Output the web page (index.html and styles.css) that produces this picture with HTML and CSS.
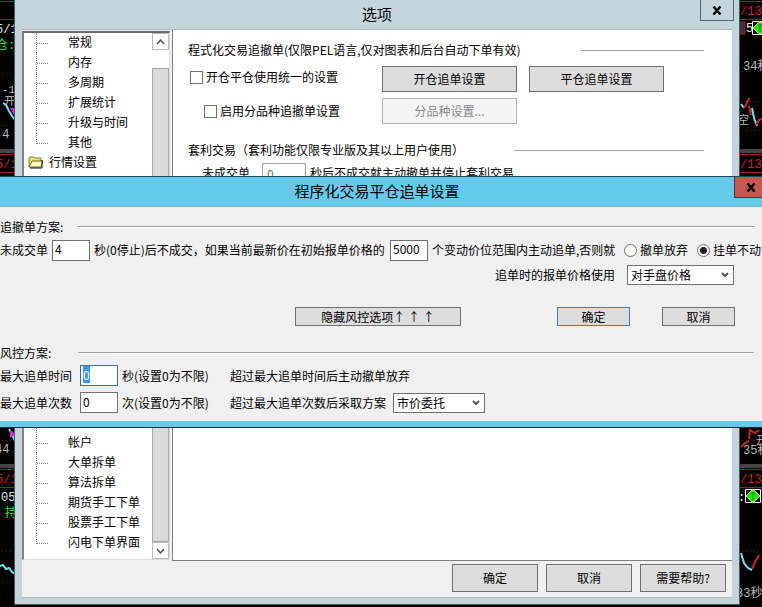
FILE: index.html
```html
<!DOCTYPE html>
<html lang="zh-CN">
<head>
    <meta charset="UTF-8">
    <meta name="viewport" content="width=device-width, initial-scale=1.0">
    <title>程序化交易平仓追单设置</title>
    <link rel="stylesheet" href="styles.css">
</head>
<body>
    <div class="desktop">
        <!-- 左侧行情图 -->
        <svg class="chart chart-left" width="16" height="607" viewBox="0 0 16 607">
            <path d="M0 1.5H16M0 19.5H16M0 154.5H16M0 172.5H16M0 469.5H16M0 487.5H16" stroke="#a81c1c"/>
            <path d="M0 149h16v4H0zM0 464h16v4H0z" fill="#444"/>
            <path d="M2 73.5H16M2 125.5H16M2 440.5H16M2 551.5H16M2 582.5H16" stroke="#701010" stroke-dasharray="1 3"/>
            <path d="M3 103l3 2 3 6 3 5 4 5M9 429l3 5 3 7M0 566l3-1 3 4 3-1 3 4 3 2" stroke="#6fe6ee" stroke-width="2" fill="none"/>
            <path d="M10 108h6v10zM10 430l6 4-6 4z" fill="#d926e0"/>
            <text class="t-white" x="-4" y="33">5/1</text>
            <text class="t-green" x="-4" y="49">仓:</text>
            <text class="t-gray small" x="2" y="93">-1</text>
            <text class="t-gray small" x="4" y="105">开</text>
            <text class="t-gray" x="-5" y="138">.4 -</text>
            <text class="t-red" x="-4" y="168">5/1</text>
            <text class="t-gray" x="-5" y="453">44 -</text>
            <text class="t-red" x="-4" y="483">5/1</text>
            <text class="t-white" x="1" y="501">05</text>
            <text class="t-green" x="5" y="517">持</text>
        </svg>
        <!-- 右侧行情图 -->
        <svg class="chart chart-right" width="24" height="607" viewBox="738 0 24 607">
            <path d="M738 1.5H762M738 19.5H762M738 154.5H762M738 172.5H762M738 469.5H762M738 487.5H762" stroke="#a81c1c"/>
            <path d="M738 149h24v4h-24zM738 464h24v4h-24z" fill="#444"/>
            <path d="M742 71.5H762M742 101.5H762M742 130.5H762M742 440.5H762M742 551.5H762" stroke="#701010" stroke-dasharray="1 3"/>
            <path d="M741 104l3 4M752 108l2 10 3 8M741 553l3 10 4 5 4 2" stroke="#6fe6ee" stroke-width="2" fill="none"/>
            <path d="M744 108l4-7 1-3M749 106l2 9M756 125l3-5 3-1M741 447l4-4 4-2M749 439l1-9 5 3 4-3M752 569l3-7 4-7" stroke="#d42020" stroke-width="2" fill="none"/>
            <path d="M738 22h7v12h-7z" fill="#333" stroke="#a81c1c"/>
            <text class="t-red" x="740" y="15">/13</text>
            <text class="t-white" x="746" y="32">5</text>
            <text class="t-gray" x="743" y="70">34秒</text>
            <text class="t-gray small" x="738" y="124">空</text>
            <text class="t-red" x="740" y="168">/13</text>
            <text class="t-gray" x="743" y="454">35秒</text>
            <text class="t-gray small" x="756" y="444">开</text>
            <text class="t-red" x="740" y="483">/13</text>
            <text class="t-white" x="738" y="501">:</text>
            <text class="t-gray" x="736" y="597">33秒</text>
            <path d="M752.500 21.500h14v13h-14z" fill="none" stroke="#fff"/>
            <path d="M753 28l6-6h2l6 6-6 6h-2z" fill="#1ee800" stroke="#b8e840"/>
            <path d="M745.500 489.500h15v13h-15z" fill="none" stroke="#fff"/>
            <path d="M746 496l6-6h2l6 6-6 6h-2z" fill="#1ee800" stroke="#b8e840"/>
            <path d="M753 492v8M751 494l2-2 2 2" stroke="#187818" fill="none"/>
            <path d="M760 24v8M758 26l2-2 2 2" stroke="#187818" fill="none"/>
        </svg>

        <!-- 选项窗口 -->
        <div class="options">
            <div class="options-title">
                <h1>选项</h1>
                <button class="close" aria-label="关闭"><svg width="10" height="9" viewBox="0 0 10 9"><path d="M1.500 0.500l7 8M8.500 0.500l-7 8" stroke="#000" stroke-width="2.400"/></svg></button>
            </div>
            <div class="options-client">
                <div class="options-main">
                    <div class="tree">
                        <div class="tree-items">
                            <ul class="branch">
                                <li>常规</li>
                                <li>内存</li>
                                <li>多周期</li>
                                <li>扩展统计</li>
                                <li>升级与时间</li>
                                <li>其他</li>
                                <li class="folder">
                                    <svg width="16" height="14" viewBox="0 0 16 14"><path d="M1 12V3l1-1h4l1 1h6v3" fill="#e4df7c" stroke="#8a8630"/><path d="M1 12l3-6h11l-2 6z" fill="#fdf9b8" stroke="#6e6a20"/><path d="M2 13h12V5" fill="none" stroke="#111"/></svg>
                                    行情设置
                                </li>
                            </ul>
                            <ul class="branch">
                                <li>帐户</li>
                                <li>大单拆单</li>
                                <li>算法拆单</li>
                                <li>期货手工下单</li>
                                <li>股票手工下单</li>
                                <li>闪电下单界面</li>
                            </ul>
                        </div>
                        <div class="scrollbar">
                            <button aria-label="向上"><svg width="9" height="6" viewBox="0 0 9 6"><path d="M1 5l3.500-4L8 5" fill="none" stroke="#555" stroke-width="1.500"/></svg></button>
                            <div class="thumb"></div>
                            <button aria-label="向下"><svg width="9" height="6" viewBox="0 0 9 6"><path d="M1 1l3.500 4L8 1" fill="none" stroke="#555" stroke-width="1.500"/></svg></button>
                        </div>
                    </div>
                    <div class="panel">
                        <div class="group-title">
                            <h2>程式化交易追撤单(仅限PEL语言,仅对图表和后台自动下单有效)</h2>
                            <hr class="line-short">
                        </div>
                        <div class="chase">
                            <label><input type="checkbox">开仓平仓使用统一的设置</label>
                            <button class="btn">开仓追单设置</button>
                            <button class="btn">平仓追单设置</button>
                            <label class="sub"><input type="checkbox">启用分品种追撤单设置</label>
                            <button class="btn" disabled>分品种设置...</button>
                        </div>
                        <div class="group-title">
                            <h2>套利交易（套利功能仅限专业版及其以上用户使用）</h2>
                            <hr class="line-long">
                        </div>
                        <div class="arbitrage">
                            <label for="arb-seconds">未成交单</label>
                            <input type="text" id="arb-seconds" value="0">
                            <span>秒后不成交就主动撤单并停止套利交易</span>
                        </div>
                    </div>
                </div>
                <div class="options-footer">
                    <button class="btn">确定</button>
                    <button class="btn">取消</button>
                    <button class="btn">需要帮助?</button>
                </div>
            </div>
        </div>

        <!-- 平仓追单设置对话框 -->
        <div class="dialog" role="dialog" aria-labelledby="dialog-title">
            <div class="dialog-title">
                <h1 id="dialog-title">程序化交易平仓追单设置</h1>
                <button class="close close-red" aria-label="关闭"><svg width="10" height="9" viewBox="0 0 10 9"><path d="M1.500 0.500l7 8M8.500 0.500l-7 8" stroke="#000" stroke-width="2.400"/></svg></button>
            </div>
            <form class="dialog-body">
                <div class="section-title">
                    <h2>追撤单方案:</h2>
                    <hr>
                </div>
                <div class="row">
                    <label for="seconds">未成交单</label>
                    <input type="text" id="seconds" value="4">
                    <label class="price-label" for="ticks">秒(0停止)后不成交，如果当前最新价在初始报单价格的</label>
                    <input type="text" id="ticks" value="5000">
                    <span class="range-label">个变动价位范围内主动追单,否则就</span>
                    <label class="radio"><input type="radio" name="otherwise">撤单放弃</label>
                    <label class="radio"><input type="radio" name="otherwise" checked>挂单不动</label>
                </div>
                <div class="row row-price">
                    <label for="price">追单时的报单价格使用</label>
                    <select id="price"><option>对手盘价格</option></select>
                </div>
                <div class="actions">
                    <button type="button" class="btn btn-toggle">隐藏风控选项↑ ↑ ↑</button>
                    <button type="button" class="btn btn-default">确定</button>
                    <button type="button" class="btn">取消</button>
                </div>
                <div class="section-title">
                    <h2>风控方案:</h2>
                    <hr>
                </div>
                <div class="row risk">
                    <label for="max-time">最大追单时间</label>
                    <input type="text" id="max-time" value="0">
                    <span class="unit">秒(设置0为不限)</span>
                    <span>超过最大追单时间后主动撤单放弃</span>
                </div>
                <div class="row risk">
                    <label for="max-count">最大追单次数</label>
                    <input type="text" id="max-count" value="0">
                    <span class="unit">次(设置0为不限)</span>
                    <label for="plan">超过最大追单次数后采取方案</label>
                    <select id="plan"><option>市价委托</option></select>
                </div>
            </form>
        </div>
    </div>

    <script>
        // 打开时选中最大追单时间
        const maxTime = document.getElementById('max-time');
        maxTime.focus();
        maxTime.select();
    </script>
</body>
</html>
```
FILE: styles.css
```css
:root {
    --frame: #c3d5db;
    --blue: #66cbea;
    --face: #f0f0f0;
    --btn: #dddddd;
    --edge: #707070;
}

* {
    box-sizing: border-box;
}

body {
    margin: 0;
    background: #000;
    color: #000;
    font-family: "Noto Sans CJK SC", sans-serif;
    font-size: 12px;
    line-height: 20px;
}

h1, h2, ul, hr {
    margin: 0;
    padding: 0;
    font-weight: normal;
}

h1 {
    font-size: 15px;
}

h2 {
    font-size: 12px;
    white-space: nowrap;
}

hr {
    border: none;
    border-top: 1px solid #a0a0a0;
}

input, button, select {
    margin: 0;
    font: inherit;
    color: inherit;
}

.desktop {
    position: relative;
    height: 100vh;
    min-height: 600px;
    overflow: hidden;
}

/* 行情图 */
.chart {
    position: absolute;
    top: 0;
    font-family: "Liberation Mono", "Noto Sans CJK SC", monospace;
    font-size: 12px;
}

.chart-left { left: 0; }
.chart-right { right: 0; }
.small { font-size: 11px; }
.t-white { fill: #e8e8e8; }
.t-gray { fill: #b8b8b8; }
.t-green { fill: #2ee02e; }
.t-red { fill: #d02020; }

/* 按钮 */
.btn {
    height: 28px;
    padding: 0;
    background: var(--btn);
    border: 1px solid var(--edge);
    line-height: 18px;
}

.btn:disabled {
    background: #f4f4f4;
    border-color: #b4b4b4;
    color: #888;
}

.close {
    position: absolute;
    top: 0;
    right: 5px;
    display: flex;
    align-items: center;
    justify-content: center;
    width: 34px;
    height: 21px;
    padding: 0;
    background: var(--frame);
    border: 1px solid #56656c;
    border-top: none;
}

.close-red {
    right: -6px;
    background: #c35a50;
    border-color: #5c3038;
}

/* 选项窗口 */
.options {
    position: absolute;
    top: 0;
    bottom: 2px;
    left: 14px;
    right: 22px;
    display: flex;
    flex-direction: column;
    padding: 0 7px 6px;
    background: var(--frame);
    border: 1px solid #4a565c;
    border-top: none;
}

.options-title {
    height: 29px;
    text-align: center;
}

.options-title h1 {
    line-height: 28px;
}

.options-client {
    flex: 1;
    display: flex;
    flex-direction: column;
    background: var(--face);
    border-top: 1px solid #b0b8bc;
    border-bottom: 1px solid #b0b8bc;
}

.options-main {
    flex: 1;
    display: flex;
    gap: 2px;
}

.tree {
    display: flex;
    width: 148px;
    margin: 1px 0;
    padding-left: 1px;
    background: #fff;
    border: 1px solid #dcdcdc;
    border-top: 2px solid #696969;
    border-left: 2px solid #808080;
}

.tree-items {
    flex: 1;
    display: flex;
    flex-direction: column;
    justify-content: space-between;
    padding-bottom: 6px;
}

.branch {
    list-style: none;
}

.branch li {
    position: relative;
    height: 20px;
    padding-left: 43px;
    line-height: 18px;
    white-space: nowrap;
}

.branch li::before {
    content: "";
    position: absolute;
    left: 11px;
    top: 0;
    width: 11px;
    height: 20px;
    border-left: 1px dotted #808080;
    background: repeating-linear-gradient(90deg, #808080 0 1px, #fff 1px 2px) 0 10px / 11px 1px no-repeat;
}

.branch li:last-child::before,
.branch li:nth-child(6)::before {
    height: 11px;
}

.branch:first-child li:last-child::before {
    display: none;
}

.branch:last-child li:first-child::before {
    top: -10px;
    height: 30px;
    background-position: 0 20px;
}

.branch .folder {
    display: flex;
    align-items: center;
    gap: 5px;
    height: 18px;
    padding-left: 3px;
}

.scrollbar {
    display: flex;
    flex-direction: column;
    width: 17px;
}

.scrollbar button {
    display: flex;
    align-items: center;
    justify-content: center;
    height: 17px;
    padding: 0;
    background: #fff;
    border: 1px solid #bcbcbc;
}

.thumb {
    flex: 1;
    margin-top: 18px;
    background: #dadada;
    border: 1px solid #a8a8a8;
}

.panel {
    flex: 1;
    padding: 10px 28px 0 15px;
    background: #fff;
    border-left: 1px solid #808080;
    border-bottom: 1px solid #808080;
}

.group-title {
    display: flex;
    align-items: center;
    justify-content: space-between;
    height: 20px;
}

.line-short { width: 123px; }
.line-long { width: 190px; }

.chase {
    display: grid;
    grid-template-columns: 182px 135px 135px;
    column-gap: 12px;
    row-gap: 6px;
    align-items: center;
    margin: 6px 0 16px;
}

.chase .btn {
    height: 26px;
}

.chase label {
    display: flex;
    align-items: center;
    gap: 3px;
    padding: 0 0 4px 2px;
    white-space: nowrap;
}

.chase .sub {
    padding: 0 0 0 16px;
}

input[type="checkbox"] {
    appearance: none;
    width: 13px;
    height: 13px;
    background: #fff;
    border: 1px solid var(--edge);
}

.arbitrage {
    display: flex;
    gap: 4px;
    margin-top: 3px;
    padding-left: 14px;
}

.arbitrage label {
    width: 56px;
}

.arbitrage input {
    width: 44px;
    height: 21px;
    padding: 0 4px;
    background: #fff;
    border: 1px solid #a0a0a0;
    color: #777;
}

.options-footer {
    display: flex;
    justify-content: flex-end;
    gap: 8px;
    padding: 3px 6px 5px;
}

.options-footer .btn {
    width: 86px;
}

/* 对话框 */
.dialog {
    position: absolute;
    top: 176px;
    left: 0;
    right: 0;
    background: var(--face);
    border-top: 1px solid #1c4654;
    border-bottom: 1px solid #1c3038;
    white-space: nowrap;
}

.dialog-title {
    position: relative;
    height: 30px;
    background: var(--blue);
    border-bottom: 1px solid #8aaebb;
    text-align: center;
    overflow: hidden;
}

.dialog-title h1 {
    margin-right: 8px;
    line-height: 28px;
}

.dialog-body {
    padding: 10px 0 5px;
    border-bottom: 6px solid var(--blue);
}

.section-title {
    display: grid;
    grid-template-columns: 78px 1fr;
    align-items: center;
    height: 19px;
    padding-right: 8px;
}

.section-title hr {
    border-bottom: 1px solid #fff;
}

.row {
    display: flex;
    align-items: center;
    gap: 4px;
    height: 28px;
}

.row > * {
    flex-shrink: 0;
}

.row input[type="text"] {
    width: 38px;
    height: 21px;
    padding: 0 2px 3px;
    background: #fff;
    border: 1px solid var(--edge);
    outline: none;
}

.row input[type="text"]:focus {
    border-color: #3d6f9e;
}

.row input::selection {
    background: #3399ff;
    color: #fff;
}

.price-label { width: 292px; }
.range-label { width: 188px; }

.radio {
    display: flex;
    align-items: center;
    gap: 3px;
}

.radio:nth-last-child(2) {
    width: 69px;
}

input[type="radio"] {
    appearance: none;
    width: 13px;
    height: 13px;
    background: #fff;
    border: 1px solid var(--edge);
    border-radius: 50%;
}

input[type="radio"]:checked {
    background: radial-gradient(circle, #222 0 3px, #fff 4px);
}

select {
    appearance: none;
    height: 20px;
    padding: 0 3px;
    border: 1px solid var(--edge);
    border-radius: 0;
    background: #fff url("data:image/svg+xml,%3Csvg xmlns='http://www.w3.org/2000/svg' width='8' height='6'%3E%3Cpath d='M1 1l3 3 3-3' fill='none' stroke='%23555' stroke-width='2'/%3E%3C/svg%3E") no-repeat right 4px center;
    line-height: 18px;
}

.row-price {
    justify-content: flex-end;
    gap: 12px;
    height: 22px;
    padding-right: 28px;
}

#price {
    width: 107px;
}

#plan {
    width: 92px;
    margin-left: 3px;
}

.actions {
    display: flex;
    justify-content: flex-end;
    gap: 32px;
    margin: 21px 27px 17px 0;
}

.actions .btn {
    width: 73px;
    height: 19px;
    line-height: 16px;
}

.actions .btn-toggle {
    width: 166px;
    margin-right: 64px;
}

.actions .btn-default {
    border-color: #3c7fb1;
}

.risk {
    height: 27px;
}

.risk label:first-child {
    width: 76px;
}

.unit {
    width: 104px;
}
```
